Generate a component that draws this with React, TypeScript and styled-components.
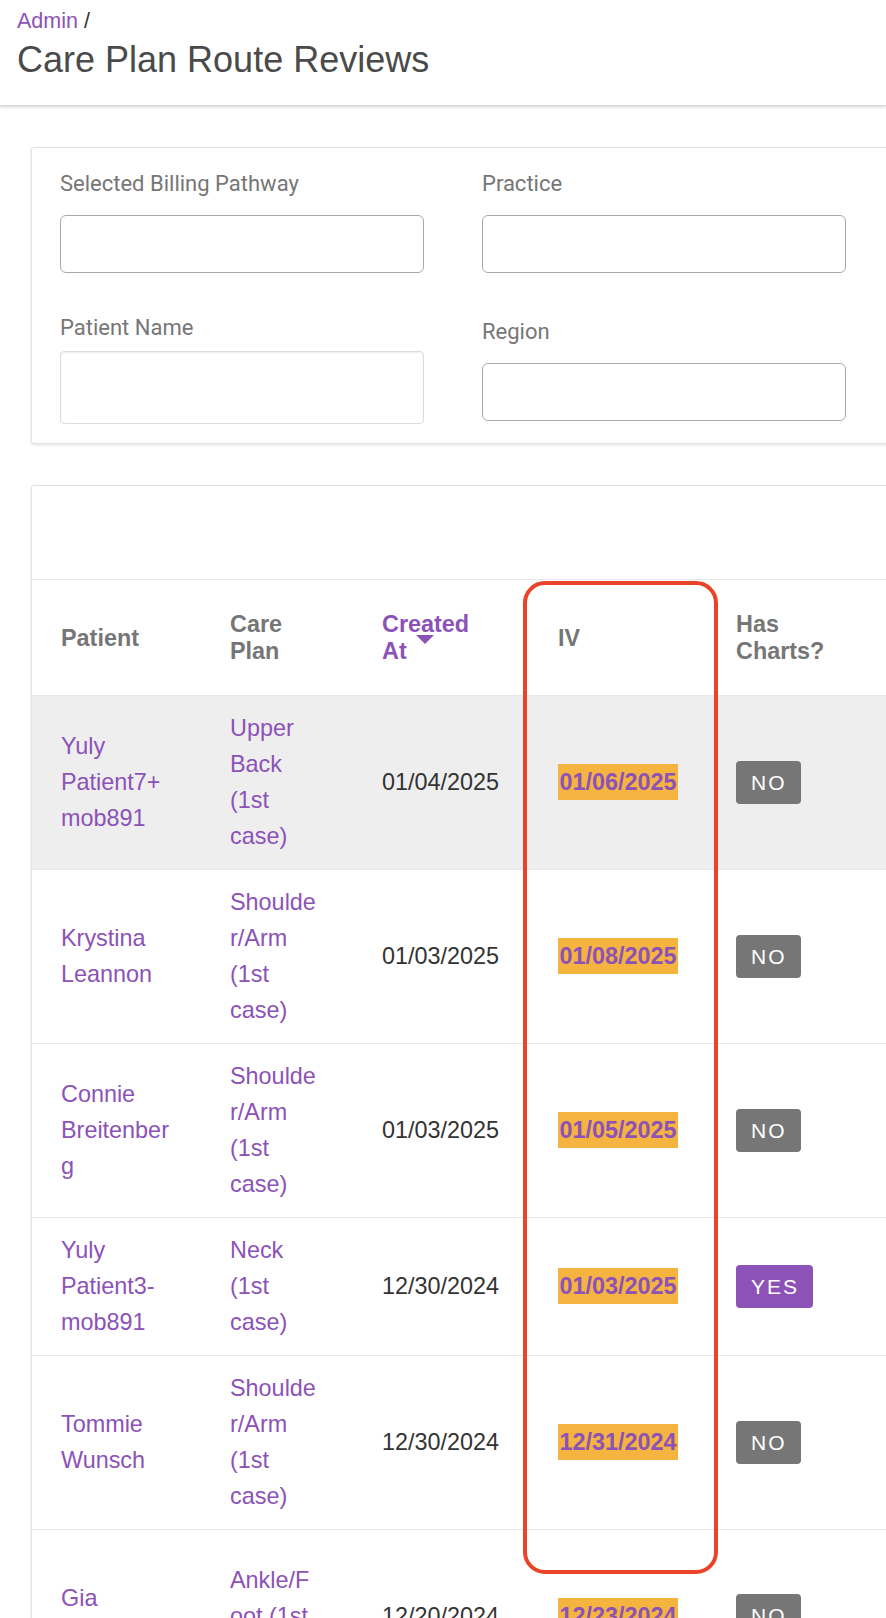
import React from "react"
import styled, { createGlobalStyle } from "styled-components"

const PURPLE = "#8c52b8"
const HEAD_GRAY = "#767676"
const LINE = "#e8e8e8"

const GlobalStyle = createGlobalStyle`
    html, body {
        margin: 0;
        padding: 0;
        overflow: hidden;
        background: #fff;
    }
    body {
        font-family: "Liberation Sans", Arial, Helvetica, sans-serif;
        color: #333;
    }
    * {
        box-sizing: border-box;
    }
`

const Page = styled.div`
    width: 886px;
    height: 1618px;
    overflow: hidden;
`

const TopBar = styled.header`
    padding: 8px 17px 23px;
    border-bottom: 1px solid #d9d9d9;
    box-shadow: 0 1px 3px rgba(0, 0, 0, 0.18);
`

const Crumbs = styled.div`
    font-size: 21.5px;
    line-height: 26px;
    color: #333;
`

const CrumbLink = styled.span`
    color: ${PURPLE};
`

const Title = styled.h1`
    margin: 4px 0 0;
    font-size: 36px;
    line-height: 44px;
    font-weight: 400;
    color: #4a4a4a;
`

const Content = styled.main`
    padding: 41px 0 0 31px;
    display: flex;
    flex-direction: column;
    gap: 41px;
`

const Card = styled.section`
    position: relative;
    width: 1100px;
    background: #fff;
    border: 1px solid #e3e3e3;
    border-radius: 3px;
    box-shadow: 0 1px 3px rgba(0, 0, 0, 0.12);
`

const FilterGrid = styled.div`
    display: grid;
    grid-template-columns: 364px 364px;
    column-gap: 58px;
    align-items: start;
    padding: 24px 28px 19px;
`

const FilterColumn = styled.div`
    display: flex;
    flex-direction: column;
`

const Field = styled.div<{ $top: number; $labelGap: number }>`
    display: flex;
    flex-direction: column;
    gap: ${({ $labelGap }) => $labelGap}px;
    margin-top: ${({ $top }) => $top}px;
`

const Label = styled.label`
    font-family: Roboto, "Liberation Sans", sans-serif;
    font-size: 22px;
    line-height: 24px;
    color: #767676;
`

const SelectBox = styled.div`
    height: 58px;
    border: 1px solid #a8a8a8;
    border-radius: 6px;
    background: #fff;
`

const TextBox = styled.div`
    height: 73px;
    border: 1px solid #dcdcdc;
    border-radius: 4px;
    background: #fff;
    box-shadow: inset 0 1px 2px rgba(0, 0, 0, 0.07);
`

const Toolbar = styled.div`
    height: 94px;
    border-bottom: 1px solid ${LINE};
`

const Table = styled.table`
    width: 100%;
    border-collapse: collapse;
    table-layout: fixed;
    font-size: 23.4px;
`

const Th = styled.th<{ $pl: number; $pr: number; $active?: boolean }>`
    padding: 31px ${({ $pr }) => $pr}px 30px ${({ $pl }) => $pl}px;
    line-height: 27px;
    font-weight: 700;
    text-align: left;
    vertical-align: middle;
    color: ${({ $active }) => ($active ? PURPLE : HEAD_GRAY)};
    border-bottom: 1px solid ${LINE};
`

const NoWrap = styled.span`
    white-space: nowrap;
`

const SortArrow = styled.span`
    display: inline-block;
    width: 0;
    height: 0;
    margin-left: 9px;
    margin-top: -3px;
    vertical-align: top;
    border-left: 9px solid transparent;
    border-right: 9px solid transparent;
    border-top: 9px solid ${PURPLE};
`

const Row = styled.tr<{ $selected?: boolean }>`
    background: ${({ $selected }) => ($selected ? "#eeeeee" : "#fff")};
`

const Td = styled.td<{ $pl: number; $pr: number; $minHeight?: number }>`
    padding: 14px ${({ $pr }) => $pr}px 15px ${({ $pl }) => $pl}px;
    height: ${({ $minHeight }) => ($minHeight ? `${$minHeight}px` : "auto")};
    line-height: 36px;
    vertical-align: middle;
    color: #333;
    border-bottom: 1px solid ${LINE};
    word-break: break-word;
    overflow-wrap: break-word;
`

const LinkText = styled.span`
    color: ${PURPLE};
`

const DateMark = styled.span`
    display: inline-block;
    padding: 0 1.5px;
    line-height: 36px;
    background: #f5b43f;
    color: ${PURPLE};
    font-weight: 700;
`

const Badge = styled.span<{ $tone: "yes" | "no" }>`
    display: inline-block;
    height: 43px;
    padding: 0 14px 0 15px;
    line-height: 43px;
    border-radius: 4px;
    font-size: 21px;
    letter-spacing: 2px;
    vertical-align: middle;
    color: #fff;
    background: ${({ $tone }) => ($tone === "yes" ? PURPLE : "#767676")};
`

// the red review marker drawn over the IV column
const Annotation = styled.div`
    position: absolute;
    left: 491px;
    top: 95px;
    width: 195px;
    height: 993px;
    border: 4px solid #e9432a;
    border-radius: 22px;
    pointer-events: none;
`

const columns = [
    { width: 183, pl: 29, pr: 42 },
    { width: 152, pl: 15, pr: 49 },
    { width: 176, pl: 15, pr: 36 },
    { width: 178, pl: 15, pr: 20 },
    { width: 200, pl: 15, pr: 65 },
]

type Review = {
    patient: string
    carePlan: string
    createdAt: string
    iv: string
    hasCharts: boolean
    selected?: boolean
    minHeight?: number
}

const reviews: Review[] = [
    { patient: "Yuly Patient7+mob891", carePlan: "Upper Back (1st case)", createdAt: "01/04/2025", iv: "01/06/2025", hasCharts: false, selected: true },
    { patient: "Krystina Leannon", carePlan: "Shoulder/Arm (1st case)", createdAt: "01/03/2025", iv: "01/08/2025", hasCharts: false },
    { patient: "Connie Breitenberg", carePlan: "Shoulder/Arm (1st case)", createdAt: "01/03/2025", iv: "01/05/2025", hasCharts: false },
    { patient: "Yuly Patient3-mob891", carePlan: "Neck (1st case)", createdAt: "12/30/2024", iv: "01/03/2025", hasCharts: true },
    { patient: "Tommie Wunsch", carePlan: "Shoulder/Arm (1st case)", createdAt: "12/30/2024", iv: "12/31/2024", hasCharts: false },
    { patient: "Gia Kuhlman", carePlan: "Ankle/Foot (1st case)", createdAt: "12/20/2024", iv: "12/23/2024", hasCharts: false, minHeight: 173 },
]

const App: React.FC = () => {
    return (
        <Page>
            <GlobalStyle />
            <TopBar>
                <Crumbs>
                    <CrumbLink>Admin</CrumbLink> /
                </Crumbs>
                <Title>Care Plan Route Reviews</Title>
            </TopBar>
            <Content>
                <Card>
                    <FilterGrid>
                        <FilterColumn>
                            <Field $top={0} $labelGap={19}>
                                <Label>Selected Billing Pathway</Label>
                                <SelectBox />
                            </Field>
                            <Field $top={43} $labelGap={11}>
                                <Label>Patient Name</Label>
                                <TextBox />
                            </Field>
                        </FilterColumn>
                        <FilterColumn>
                            <Field $top={0} $labelGap={19}>
                                <Label>Practice</Label>
                                <SelectBox />
                            </Field>
                            <Field $top={47} $labelGap={19}>
                                <Label>Region</Label>
                                <SelectBox />
                            </Field>
                        </FilterColumn>
                    </FilterGrid>
                </Card>
                <Card>
                    <Toolbar />
                    <Table>
                        <colgroup>
                            {columns.map((c, i) => (
                                <col key={i} style={{ width: c.width }} />
                            ))}
                            <col />
                        </colgroup>
                        <thead>
                            <tr>
                                <Th $pl={columns[0].pl} $pr={columns[0].pr}>Patient</Th>
                                <Th $pl={columns[1].pl} $pr={columns[1].pr}>Care Plan</Th>
                                <Th $pl={columns[2].pl} $pr={columns[2].pr} $active>
                                    Created <NoWrap>At<SortArrow /></NoWrap>
                                </Th>
                                <Th $pl={columns[3].pl} $pr={columns[3].pr}>IV</Th>
                                <Th $pl={columns[4].pl} $pr={columns[4].pr}>Has Charts?</Th>
                                <Th $pl={15} $pr={15} />
                            </tr>
                        </thead>
                        <tbody>
                            {reviews.map((r) => (
                                <Row key={r.patient} $selected={r.selected}>
                                    <Td $pl={columns[0].pl} $pr={columns[0].pr} $minHeight={r.minHeight}>
                                        <LinkText>{r.patient}</LinkText>
                                    </Td>
                                    <Td $pl={columns[1].pl} $pr={columns[1].pr}>
                                        <LinkText>{r.carePlan}</LinkText>
                                    </Td>
                                    <Td $pl={columns[2].pl} $pr={columns[2].pr}>{r.createdAt}</Td>
                                    <Td $pl={columns[3].pl} $pr={columns[3].pr}>
                                        <DateMark>{r.iv}</DateMark>
                                    </Td>
                                    <Td $pl={columns[4].pl} $pr={columns[4].pr}>
                                        <Badge $tone={r.hasCharts ? "yes" : "no"}>{r.hasCharts ? "YES" : "NO"}</Badge>
                                    </Td>
                                    <Td $pl={15} $pr={15} />
                                </Row>
                            ))}
                        </tbody>
                    </Table>
                    <Annotation />
                </Card>
            </Content>
        </Page>
    )
}

export default App
